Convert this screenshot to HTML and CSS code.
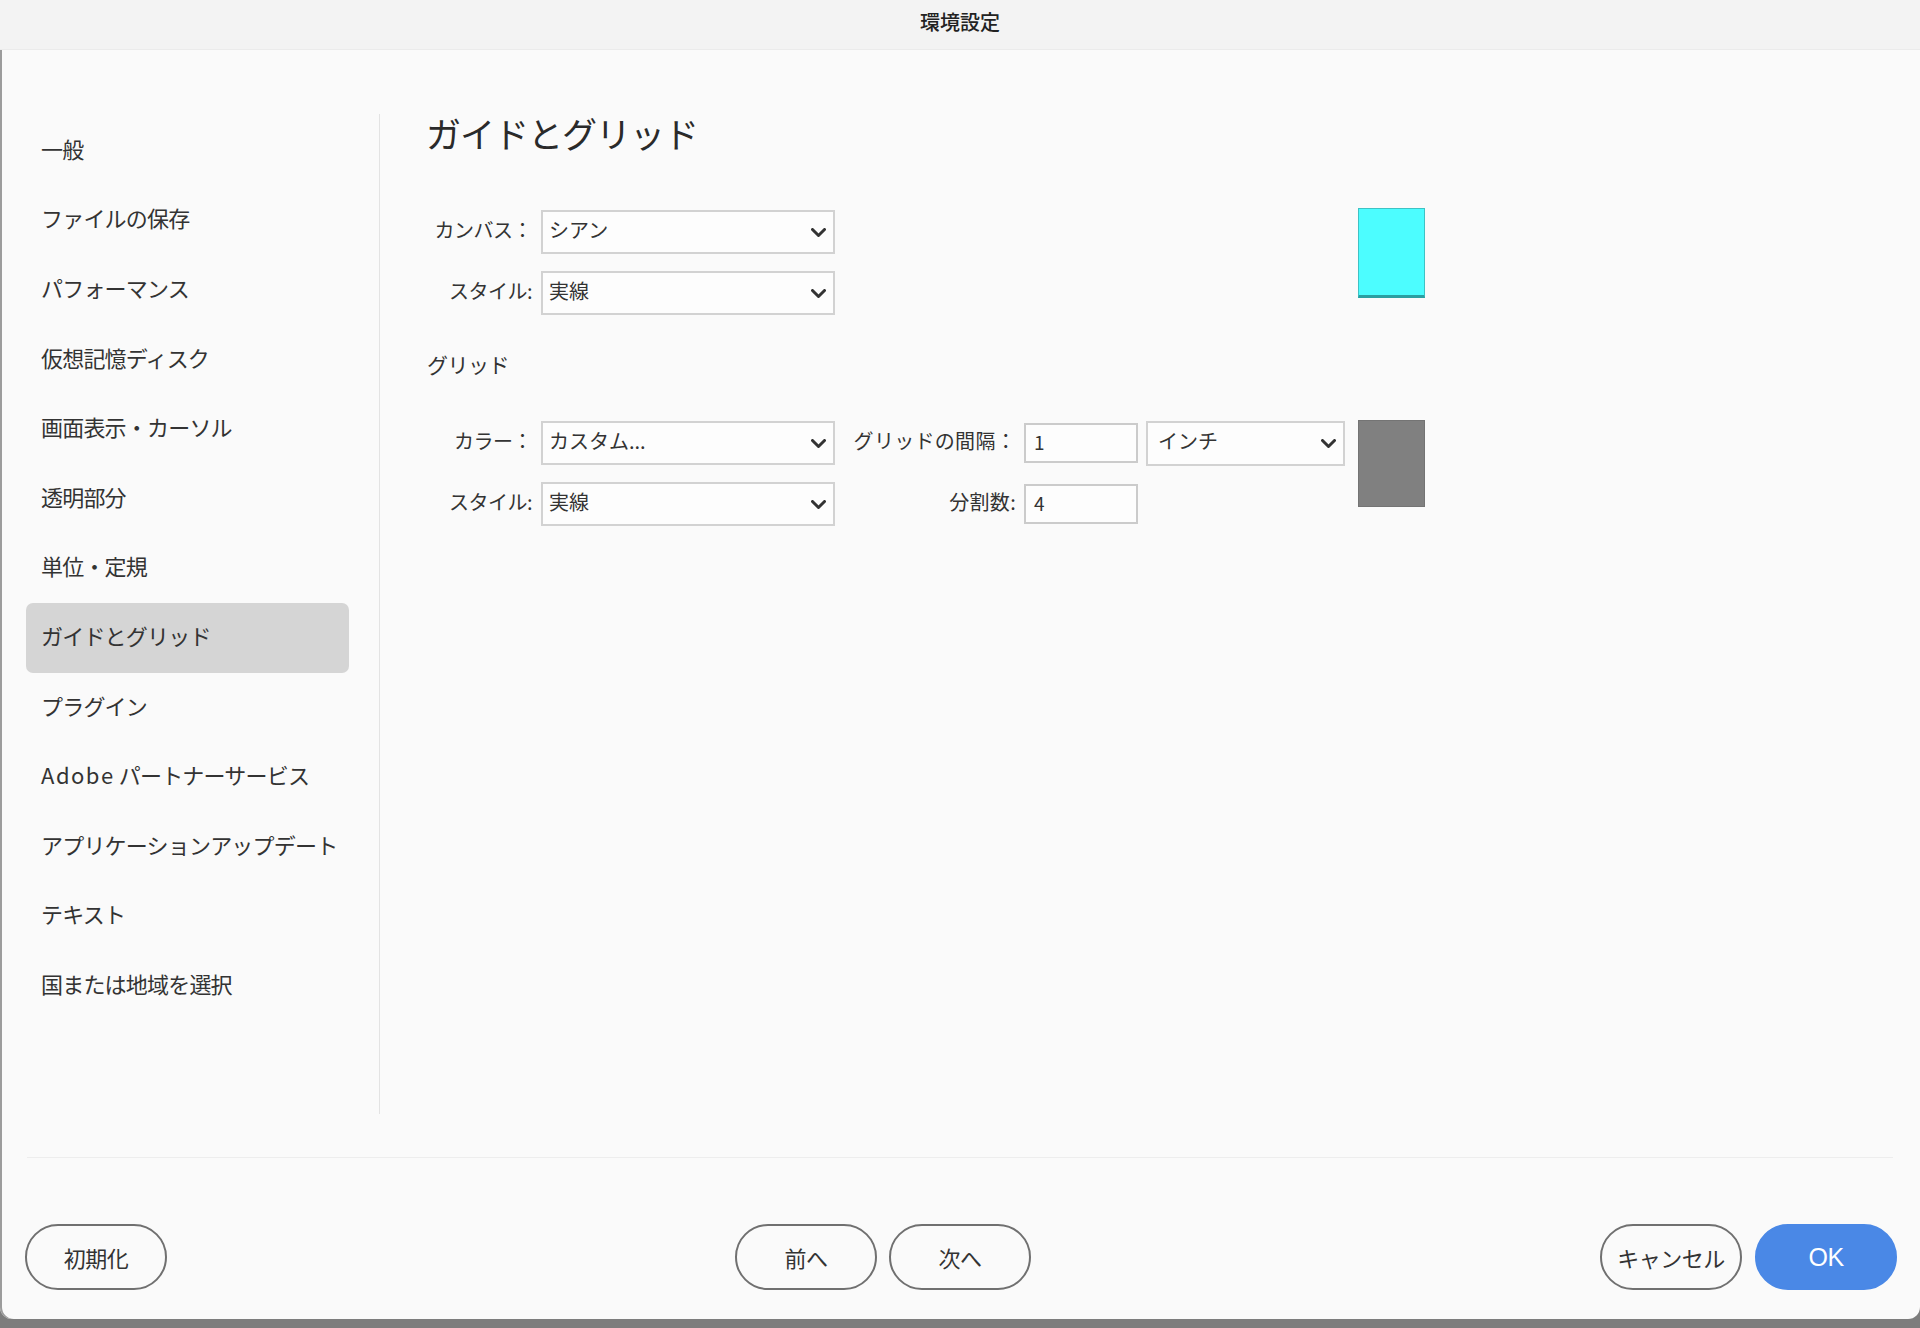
FILE: index.html
```html
<!DOCTYPE html>
<html lang="ja">
<head>
<meta charset="utf-8">
<title>環境設定</title>
<link rel="stylesheet" href="styles.css">
</head>
<body>
<div class="window">
  <header class="titlebar">環境設定</header>
  <div class="main">
    <nav class="sidebar">
      <ul class="nav">
        <li class="nav-item">一般</li>
        <li class="nav-item">ファイルの保存</li>
        <li class="nav-item">パフォーマンス</li>
        <li class="nav-item">仮想記憶ディスク</li>
        <li class="nav-item">画面表示・カーソル</li>
        <li class="nav-item">透明部分</li>
        <li class="nav-item">単位・定規</li>
        <li class="nav-item active">ガイドとグリッド</li>
        <li class="nav-item">プラグイン</li>
        <li class="nav-item"><span class="latin">Adobe</span>&nbsp;パートナーサービス</li>
        <li class="nav-item">アプリケーションアップデート</li>
        <li class="nav-item">テキスト</li>
        <li class="nav-item">国または地域を選択</li>
      </ul>
    </nav>
    <div class="divider"></div>
    <section class="content">
      <h1 class="heading">ガイドとグリッド</h1>
      <div class="form-grid guide-grid">
        <label class="label r1">カンバス：</label>
        <div class="select r1 c2"><span>シアン</span><svg class="chev" viewBox="0 0 15 9"><polyline points="1.5,1.5 7.5,7.5 13.5,1.5"/></svg></div>
        <label class="label r2">スタイル:</label>
        <div class="select r2 c2"><span>実線</span><svg class="chev" viewBox="0 0 15 9"><polyline points="1.5,1.5 7.5,7.5 13.5,1.5"/></svg></div>
        <div class="swatch cyan"></div>
      </div>
      <h2 class="subheading">グリッド</h2>
      <div class="form-grid grid-grid">
        <label class="label r1">カラー：</label>
        <div class="select r1 c2"><span>カスタム...</span><svg class="chev" viewBox="0 0 15 9"><polyline points="1.5,1.5 7.5,7.5 13.5,1.5"/></svg></div>
        <label class="label label2 r1">グリッドの間隔：</label>
        <div class="input r1">1</div>
        <div class="select unit r1"><span>インチ</span><svg class="chev" viewBox="0 0 15 9"><polyline points="1.5,1.5 7.5,7.5 13.5,1.5"/></svg></div>
        <label class="label r2">スタイル:</label>
        <div class="select r2 c2"><span>実線</span><svg class="chev" viewBox="0 0 15 9"><polyline points="1.5,1.5 7.5,7.5 13.5,1.5"/></svg></div>
        <label class="label label2 r2">分割数:</label>
        <div class="input r2">4</div>
        <div class="swatch gray"></div>
      </div>
    </section>
  </div>
  <div class="sep"></div>
  <footer class="footer">
    <button class="btn">初期化</button>
    <button class="btn prev">前へ</button>
    <button class="btn next">次へ</button>
    <button class="btn cancel">キャンセル</button>
    <button class="btn ok">OK</button>
  </footer>
</div>
</body>
</html>
```
FILE: styles.css
```css
* { box-sizing: border-box; }
html, body { margin: 0; padding: 0; }
body {
  width: 1920px;
  height: 1328px;
  background: #7d7d7d;
  font-family: "Noto Sans CJK JP", "Noto Sans", sans-serif;
  color: #2e2e2e;
  overflow: hidden;
}
.window {
  width: 1920px;
  height: 1319px;
  background: #fafafa;
  border-radius: 0 0 12px 12px;
  box-shadow: inset 2px 0 0 #9c9c9c;
  display: flex;
  flex-direction: column;
}
.titlebar {
  height: 50px;
  background: #f3f3f3;
  border-bottom: 1px solid #ebebeb;
  text-align: center;
  font-size: 20px;
  font-weight: 500;
  line-height: 44px;
  color: #222;
}
.main {
  display: flex;
  height: 1107px;
}
.sidebar {
  width: 379px;
  padding-top: 66px;
}
.nav {
  list-style: none;
  margin: 0;
  padding: 0;
}
.nav-item {
  margin-left: 26px;
  width: 323px;
  height: 69.6px;
  padding-left: 15px;
  padding-bottom: 6px;
  display: flex;
  align-items: center;
  font-size: 22px;
  letter-spacing: -0.8px;
  color: #333;
  border-radius: 7px;
  white-space: nowrap;
}
.nav-item .latin {
  letter-spacing: 1.5px;
}
.nav-item.active {
  background: #d5d5d5;
}
.divider {
  width: 1px;
  height: 1000px;
  margin-top: 64px;
  background: #e3e3e3;
}
.content {
  flex: 1;
  padding-left: 46px;
  padding-top: 62px;
}
.heading {
  margin: 0;
  font-size: 35px;
  font-weight: 400;
  line-height: 42px;
  letter-spacing: -1px;
  color: #2a2a2a;
}
.form-grid {
  display: grid;
  grid-template-columns: 115px 294px 189px 114px 220px 67px;
  grid-template-rows: 44px 44px;
  row-gap: 17px;
}
.guide-grid { margin-top: 56px; }
.grid-grid { margin-top: 42px; }
.label {
  grid-column: 1;
  align-self: center;
  text-align: right;
  padding-right: 9px;
  padding-bottom: 5px;
  font-size: 20px;
  letter-spacing: -0.5px;
  color: #333;
  white-space: nowrap;
}
.label2 {
  grid-column: 3;
  padding-right: 8px;
  letter-spacing: 0.3px;
}
.r1 { grid-row: 1; }
.r2 { grid-row: 2; }
.c2 { grid-column: 2; }
.select {
  height: 44px;
  border: 2px solid #d2d2d2;
  background: #fdfdfd;
  display: flex;
  align-items: center;
  justify-content: space-between;
  padding: 0 7px 0 6px;
  font-size: 20px;
  color: #333;
}
.select span {
  margin-bottom: 5px;
}
.select.unit {
  grid-column: 5;
  width: 199px;
  margin-left: 8px;
  height: 45px;
  padding-left: 10px;
  align-self: center;
}
.chev {
  width: 15px;
  height: 9px;
  fill: none;
  stroke: #333;
  stroke-width: 3;
  stroke-linecap: round;
  stroke-linejoin: round;
}
.input {
  grid-column: 4;
  height: 40px;
  align-self: center;
  border: 2px solid #cbcbcb;
  background: #fdfdfd;
  padding-left: 8px;
  font-size: 19px;
  line-height: 33px;
  color: #333;
}
.swatch {
  grid-column: 6;
  grid-row: 1 / span 2;
  width: 67px;
  align-self: start;
}
.swatch.cyan {
  height: 90px;
  margin-top: -2px;
  background: #4cfdff;
  border: 1px solid #3ec2c4;
  border-bottom: 3px solid #2a9fa1;
}
.swatch.gray {
  height: 87px;
  margin-top: -1px;
  background: #808080;
  border: 1px solid #747474;
}
.subheading {
  margin: 34px 0 0 1px;
  font-size: 21px;
  font-weight: 400;
  line-height: 30px;
  letter-spacing: -0.5px;
  color: #333;
}
.sep {
  height: 1px;
  margin: 0 27px;
  background: #ededed;
}
.footer {
  display: flex;
  align-items: flex-start;
  padding: 66px 23px 0 25px;
}
.btn {
  width: 142px;
  height: 66px;
  border-radius: 33px;
  border: 2px solid #707070;
  background: transparent;
  font-family: "Noto Sans CJK JP", "Noto Sans", sans-serif;
  font-size: 22px;
  color: #333;
  padding: 0;
  letter-spacing: -0.5px;
}
.btn.prev { margin-left: 568px; }
.btn.next { margin-left: 12px; }
.btn.cancel { margin-left: auto; }
.btn.ok {
  margin-left: 13px;
  background: #4a88e6;
  border-color: #4a88e6;
  color: #fff;
  font-family: "Liberation Sans", Arial, sans-serif;
  font-size: 25px;
}
```
